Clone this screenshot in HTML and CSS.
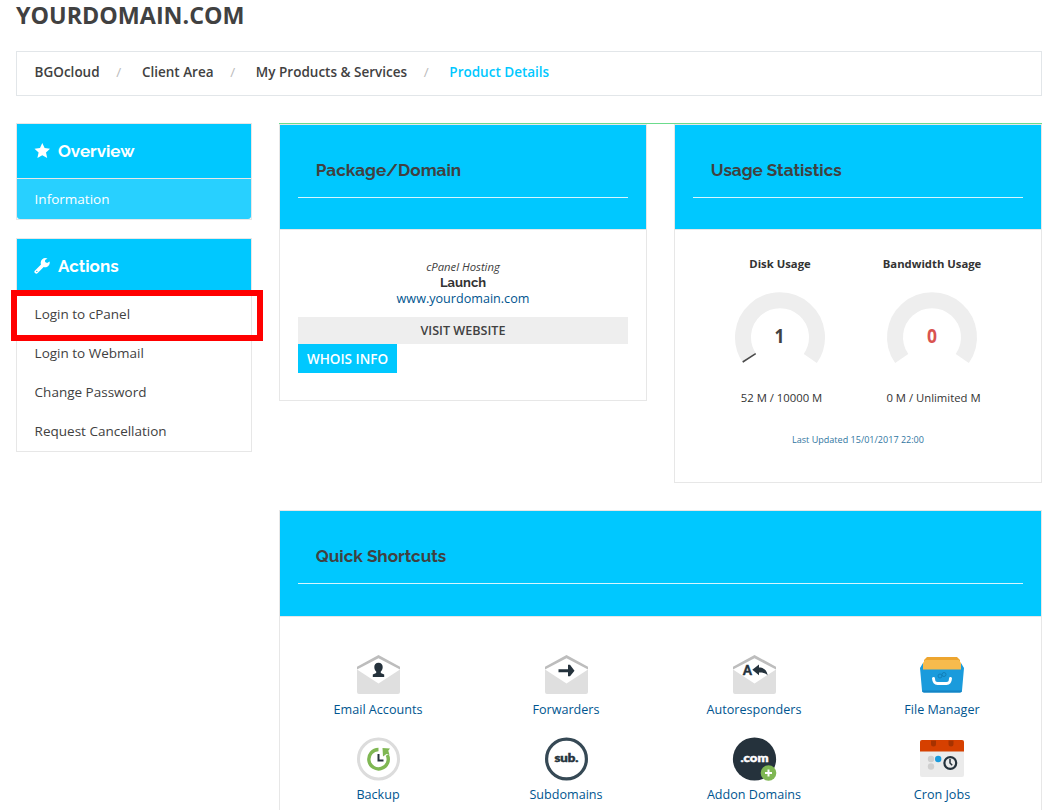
FILE: index.html
```
<!DOCTYPE html>
<html lang="en">
  <head>
    <meta charset="utf-8">
    <title>Product Details</title>
    <link rel="stylesheet" href="styles.css">
  </head>
  <body>

    <h1>YOURDOMAIN.COM</h1>

    <div class="breadcrumb">
        <a href="#">BGOcloud</a>
        <span class="slash">/</span>
        <a href="#">Client Area</a>
        <span class="slash">/</span>
        <a href="#">My Products &amp; Services</a>
        <span class="slash">/</span>
        <span class="current">Product Details</span>
    </div>

    <div class="page">
        <div class="sidebar">
            <div class="menu">
                <div class="menu-title">
                    <svg width="16" height="16" viewBox="0 0 16 16"><path fill="#fff" d="M8.300 0l2.300 5.100 5.400.6-4 3.800 1.200 5.600-4.900-2.800-4.900 2.800 1.200-5.600-4.100-3.800 5.500-.6z"/></svg>
                    <span>Overview</span>
                </div>
                <a class="menu-item active" href="#">Information</a>
            </div>
            <div class="menu actions">
                <div class="menu-title">
                    <svg width="16" height="16" viewBox="0 0 16 16"><path fill="#fff" d="M15.600 3.500l-2.500 1.500-2-1.100V1.900L13.500.6A4.700 4.700 0 0 0 7 6.400L1 12.400a1.900 1.900 0 0 0 2.700 2.700l6-6a4.700 4.700 0 0 0 5.900-5.600zM2.800 12.700a.7.7 0 1 1 0 1.400.7.7 0 0 1 0-1.400z"/></svg>
                    <span>Actions</span>
                </div>
                <a class="menu-item marked" href="#">Login to cPanel</a>
                <a class="menu-item" href="#">Login to Webmail</a>
                <a class="menu-item" href="#">Change Password</a>
                <a class="menu-item" href="#">Request Cancellation</a>
            </div>
        </div>

        <div class="main">
            <div class="cards">
                <div class="card package">
                    <div class="card-head"><h3>Package/Domain</h3></div>
                    <div class="card-body">
                        <em>cPanel Hosting</em>
                        <strong>Launch</strong>
                        <a class="site" href="#">www.yourdomain.com</a>
                        <a class="visit" href="#">VISIT WEBSITE</a>
                        <a class="whois" href="#">WHOIS INFO</a>
                    </div>
                </div>

                <div class="card usage">
                    <div class="card-head"><h3>Usage Statistics</h3></div>
                    <div class="gauges">
                        <div class="gauge">
                            <b>Disk Usage</b>
                            <svg width="100" height="80" viewBox="0 0 100 80">
                                <path class="track" d="M19.700 66.500A37 37 0 1 1 80.300 66.500"/>
                                <path class="needle" d="M12.700 70L25.700 61.700"/>
                                <text x="49.500" y="50.500" textLength="10" lengthAdjust="spacingAndGlyphs">1</text>
                            </svg>
                            <span>52 M / 10000 M</span>
                        </div>
                        <div class="gauge">
                            <b>Bandwidth Usage</b>
                            <svg width="100" height="80" viewBox="0 0 100 80">
                                <path class="track" d="M19.700 66.500A37 37 0 1 1 80.300 66.500"/>
                                <text class="red" x="50" y="50.500" textLength="10" lengthAdjust="spacingAndGlyphs">0</text>
                            </svg>
                            <span>0 M / Unlimited M</span>
                        </div>
                    </div>
                    <div class="updated">Last Updated 15/01/2017 22:00</div>
                </div>
            </div>

            <div class="card shortcuts">
                <div class="card-head"><h3>Quick Shortcuts</h3></div>
                <div class="icons">
                    <a href="#">
                        <svg width="48" height="48" viewBox="-.5 0 48 48">
                            <path fill="#bdbdbd" d="M2.500 19.500v-2.700L24 5l21.500 11.800v2.700L24 8.200z"/>
                            <path fill="#dfdfdf" d="M2.500 19.500L24 33.500l21.500-14V42a2 2 0 0 1-2 2h-39a2 2 0 0 1-2-2z"/>
                            <path fill="#25323c" d="M24 12.800c2.700 0 4.200 1.700 4.200 4.200 0 2-.9 3.600-1.900 4.600v1.400l3.400 1.600V27H18.300v-2.400l3.400-1.600v-1.400C20.700 20.600 19.800 19 19.800 17c0-2.500 1.500-4.200 4.200-4.200z"/>
                        </svg>
                        <span>Email Accounts</span>
                    </a>
                    <a href="#">
                        <svg width="48" height="48" viewBox="-.5 0 48 48">
                            <path fill="#bdbdbd" d="M2.500 19.500v-2.700L24 5l21.500 11.800v2.700L24 8.200z"/>
                            <path fill="#dfdfdf" d="M2.500 19.500L24 33.500l21.500-14V42a2 2 0 0 1-2 2h-39a2 2 0 0 1-2-2z"/>
                            <path fill="#25323c" d="M16 19.200h9.500v-4.400h2l4.500 5.900-4.500 5.600h-2v-4H16z"/>
                        </svg>
                        <span>Forwarders</span>
                    </a>
                    <a href="#">
                        <svg width="48" height="48" viewBox="-.5 0 48 48">
                            <path fill="#bdbdbd" d="M2.500 19.500v-2.700L24 5l21.500 11.800v2.700L24 8.200z"/>
                            <path fill="#dfdfdf" d="M2.500 19.500L24 33.500l21.500-14V42a2 2 0 0 1-2 2h-39a2 2 0 0 1-2-2z"/>
                            <text class="glyph" x="17" y="25" font-size="12.500">A</text>
                            <path fill="#25323c" d="M21.800 19.800l6.700-5.300v3c4.700 0 8 2.400 8.700 7.900-2-2.200-4.500-2.800-8.700-2.800v2.700z"/>
                        </svg>
                        <span>Autoresponders</span>
                    </a>
                    <a href="#">
                        <svg width="48" height="48" viewBox="0 0 48 48">
                            <path fill="#eda52f" d="M9 7h30l3 3v5H6v-5z"/>
                            <path fill="#f7bb4d" d="M7 10h34l2 3v8H5v-8z"/>
                            <path fill="#1a9bdc" d="M5 13v6.500h38V13l3 5-2 22.500a2 2 0 0 1-2 2H6a2 2 0 0 1-2-2L2 18z"/>
                            <path fill="#1584c4" d="M4 40.500h40a2 2 0 0 1-2 2H6a2 2 0 0 1-2-2z"/>
                            <g fill="none" stroke="#127fb8" stroke-width="1"><circle cx="22" cy="26" r="2"/><circle cx="26" cy="24.500" r="2"/></g>
                            <path fill="none" stroke="#fff" stroke-width="3" stroke-linecap="round" d="M15.500 28.500c.3 4 1.500 5 4 5h9c2.500 0 3.700-1 4-5"/>
                        </svg>
                        <span>File Manager</span>
                    </a>
                    <a href="#">
                        <svg width="48" height="48" viewBox="-.5 0 48 48">
                            <circle cx="24" cy="24" r="20" fill="#fff" stroke="#dcdcdc" stroke-width="3"/>
                            <path fill="none" stroke="#7fb753" stroke-width="3.400" d="M24 14.500a9.700 9.700 0 1 0 8.800 5.500"/>
                            <path fill="#7fb753" d="M28 13l7.500.5-1.700 2.300 1.200 4-3-.8-3.500 2.500z"/>
                            <path fill="none" stroke="#25323c" stroke-width="2" d="M24 19v6.500h5"/>
                        </svg>
                        <span>Backup</span>
                    </a>
                    <a href="#">
                        <svg width="48" height="48" viewBox="-.5 0 48 48">
                            <circle cx="24" cy="24" r="19.900" fill="#fff" stroke="#364955" stroke-width="3.200"/>
                            <text class="glyph" x="24" y="26.500" font-size="11" textLength="24" lengthAdjust="spacingAndGlyphs">sub.</text>
                        </svg>
                        <span>Subdomains</span>
                    </a>
                    <a href="#">
                        <svg width="48" height="48" viewBox="-.5 0 48 48">
                            <circle cx="24" cy="24" r="21.600" fill="#25323c"/>
                            <text class="glyph white" x="24" y="27" font-size="12" textLength="28" lengthAdjust="spacingAndGlyphs">.com</text>
                            <circle cx="38" cy="38" r="7.800" fill="#7fb753"/>
                            <path stroke="#fff" stroke-width="2" d="M34.500 38h7M38 34.500v7"/>
                        </svg>
                        <span>Addon Domains</span>
                    </a>
                    <a href="#">
                        <svg width="48" height="48" viewBox="0 0 48 48">
                            <rect x="2" y="5" width="44" height="37" rx="2" fill="#ebebeb"/>
                            <path fill="#d64000" d="M4 5h40a2 2 0 0 1 2 2v9.500H2V7a2 2 0 0 1 2-2z"/>
                            <path fill="#a63200" d="M13 5.500h5V9a2.500 2.500 0 0 1-5 0zM30.500 5.500h5V9a2.500 2.500 0 0 1-5 0z"/>
                            <g fill="#cfcfcf"><circle cx="13" cy="24" r="3.200"/><circle cx="13" cy="31.500" r="3.200"/></g>
                            <circle cx="20.200" cy="24" r="3.200" fill="#1a9bdc"/>
                            <circle cx="32.300" cy="28" r="5.900" fill="#ebebeb" stroke="#25323c" stroke-width="2.200"/>
                            <path fill="none" stroke="#25323c" stroke-width="1.500" d="M32 24v4l2.200 2.300"/>
                        </svg>
                        <span>Cron Jobs</span>
                    </a>
                </div>
            </div>
        </div>
    </div>

  </body>
</html>
```
FILE: styles.css
```
*, *:before {
    box-sizing: border-box;
}
body {
    margin: 0;
    padding: 0 11px 0 16px;
    height: 810px;
    overflow: hidden;
    background-color: #fff;
    color: #414141;
    font-family: "Open Sans", sans-serif;
    font-size: 13px;
}
a {
    color: inherit;
    text-decoration: none;
}
h1 {
    margin: 0;
    height: 51px;
    font-size: 23.3px;
    font-weight: 700;
    line-height: 31px;
}
.breadcrumb {
    display: flex;
    height: 45px;
    padding: 0 17.6px;
    border: 1px solid #e2e6e9;
    font-size: 13.5px;
    line-height: 40px;
    font-weight: 600;
}
.slash {
    width: 42.3px;
    padding-right: 4px;
    text-align: center;
    color: #bbb;
    font-weight: 400;
}
.current {
    color: #00c8ff;
}
.page {
    display: flex;
    align-items: flex-start;
    gap: 27px;
    margin-top: 27px;
}
.sidebar {
    width: 236px;
}
.menu {
    margin-bottom: 18px;
    border: 1px solid #e7e7e7;
}
.menu-title {
    display: flex;
    align-items: center;
    gap: 8px;
    height: 55px;
    padding-left: 17px;
    border-bottom: 1px solid #e7e7e7;
    background-color: #00c8ff;
    color: #fff;
    font-family: Raleway, Lato, sans-serif;
    font-size: 17px;
    font-weight: 700;
}
.menu-item {
    display: block;
    height: 39px;
    padding-left: 17.6px;
    font-size: 13.5px;
    line-height: 39px;
}
.menu-item.active {
    height: 40px;
    border-radius: 0 0 3px 3px;
    background-color: #28d0ff;
    color: #fff;
    line-height: 41px;
}
/* red frame round the highlighted entry */
.marked {
    position: relative;
    margin-top: 1px;
}
.marked:before {
    position: absolute;
    top: -5px;
    left: -6px;
    width: 252px;
    height: 51px;
    border: 6px solid #ff0000;
    content: "";
}
.main {
    width: 763px;
    border-top: 1px solid #6bdc8c;
}
.cards {
    display: flex;
    align-items: flex-start;
    justify-content: space-between;
}
.card {
    border: 1px solid #e7e7e7;
}
.package {
    width: 368px;
    height: 277px;
}
.usage {
    width: 368px;
    height: 359px;
}
.shortcuts {
    height: 330px;
    margin-top: 27px;
}
.card-head {
    height: 105px;
    padding: 18px 18px 0;
    border-bottom: 1px solid #e7e7e7;
    background-color: #00c8ff;
}
.shortcuts .card-head {
    height: 106px;
}
h3 {
    margin: 0;
    height: 55px;
    padding-left: 17.8px;
    border-bottom: 1px solid #d6f6ff;
    font-family: Raleway, Lato, sans-serif;
    font-size: 17.1px;
    font-weight: 700;
    line-height: 54px;
}
.card-body {
    display: flex;
    flex-direction: column;
    align-items: center;
    padding: 29px 18px 0;
    line-height: 16px;
}
.card-body em {
    font-size: 11.3px;
}
.card-body strong {
    font-family: Raleway, Lato, sans-serif;
    color: #333;
}
.site {
    color: #00558f;
    font-size: 12.6px;
    line-height: 15px;
}
.visit {
    width: 330px;
    height: 27px;
    margin-top: 11px;
    background-color: #eee;
    line-height: 27px;
    text-align: center;
    font-size: 12.6px;
    font-weight: 600;
}
.whois {
    align-self: flex-start;
    width: 99px;
    height: 29px;
    background-color: #00c8ff;
    color: #fff;
    line-height: 30px;
    text-align: center;
    font-size: 13.5px;
    font-weight: 600;
}
.gauges {
    display: flex;
    padding: 26px 32px 0 29px;
}
.gauge {
    display: flex;
    flex-direction: column;
    align-items: center;
    width: 152px;
    font-size: 11.3px;
    line-height: 16px;
}
.gauge svg {
    margin: 20px 0 18px;
}
.gauge b {
    color: #333;
}
.gauge span {
    padding-left: 3px;
    color: #333;
}
.track {
    fill: none;
    stroke: #eee;
    stroke-width: 16;
}
.needle {
    stroke: #4a4a4a;
    stroke-width: 1.5;
}
.gauge text {
    fill: #414141;
    font-size: 19px;
    font-weight: 700;
    text-anchor: middle;
}
.gauge .red {
    fill: #d9534f;
}
.updated {
    margin-top: 26px;
    text-align: center;
    color: #31769f;
    font-size: 9.05px;
    line-height: 16px;
}
.icons {
    display: grid;
    grid-template-columns: repeat(4, 188px);
    padding: 33px 4px 0;
}
.icons a {
    display: flex;
    flex-direction: column;
    align-items: center;
    height: 85px;
    color: #00558f;
    font-size: 12.6px;
}
.icons a span {
    line-height: 24px;
}
.glyph {
    fill: #25323c;
    stroke: #25323c;
    stroke-width: .5;
    font-family: Lato, sans-serif;
    font-weight: 900;
    text-anchor: middle;
}
.glyph.white {
    fill: #fff;
    stroke: #fff;
}
```
